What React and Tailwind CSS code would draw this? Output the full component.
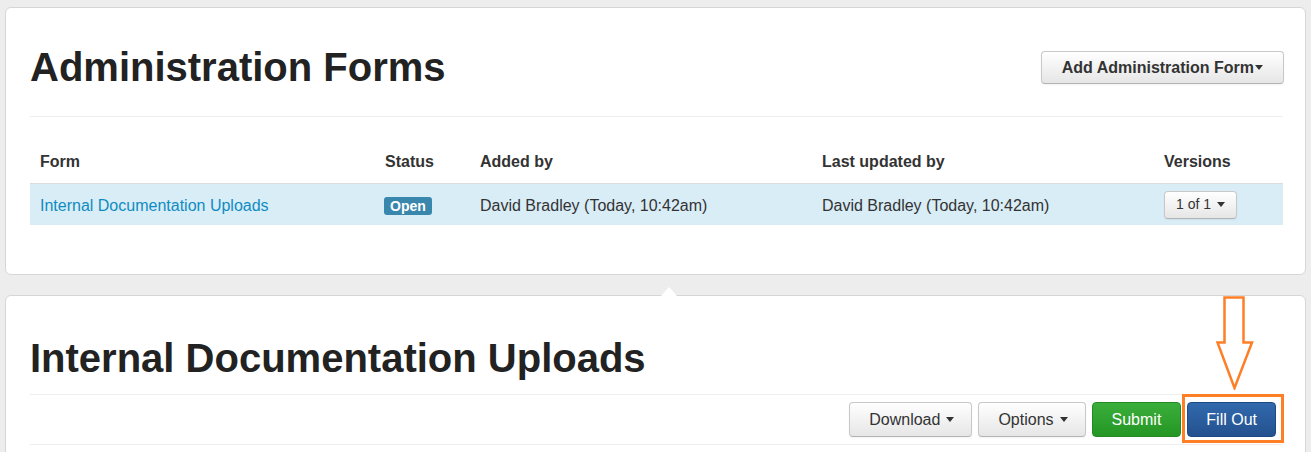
import React from 'react';

// Small downward caret used on dropdown buttons
function Caret({ className = '' }) {
  return (
    <span
      className={`inline-block w-0 h-0 border-t-[5px] border-t-[#333] border-x-[4.5px] border-x-transparent ${className}`}
    />
  );
}

function DefaultButton({ children, className = '' }) {
  return (
    <button
      className={`flex items-center rounded-[4px] border border-[#c8c8c8] border-b-[#b3b3b3] bg-gradient-to-b from-white to-[#e6e6e6] text-[#333] shadow-[inset_0_1px_0_rgba(255,255,255,0.3),0_1px_2px_rgba(0,0,0,0.05)] ${className}`}
    >
      {children}
    </button>
  );
}

const COLUMNS = [
  { label: 'Form', width: 'w-[345px]' },
  { label: 'Status', width: 'w-[95px]' },
  { label: 'Added by', width: 'w-[342px]' },
  { label: 'Last updated by', width: 'w-[342px]' },
  { label: 'Versions', width: 'w-[129px]' },
];

function FormsTable() {
  return (
    <table className="w-[1253px] table-fixed border-collapse text-[16px] text-[#333]">
      <thead>
        <tr>
          {COLUMNS.map(col => (
            <th
              key={col.label}
              className={`${col.width} h-[43px] px-[10px] pt-[2px] text-left align-middle font-bold border-b border-[#dcdcdc]`}
            >
              {col.label}
            </th>
          ))}
        </tr>
      </thead>
      <tbody>
        <tr className="bg-[#d9edf7]">
          <td className="h-[42px] px-[10px] pt-[4px] align-middle">
            <a className="text-[#0e8cc2]" href="#">Internal Documentation Uploads</a>
          </td>
          <td className="px-[9px] pt-[4px] align-middle">
            <span className="inline-flex items-center h-[18px] px-[6px] rounded-[3px] bg-[#3a87ad] text-white font-bold text-[14px] leading-none">
              Open
            </span>
          </td>
          <td className="px-[10px] pt-[4px] align-middle">David Bradley (Today, 10:42am)</td>
          <td className="px-[10px] pt-[4px] align-middle">David Bradley (Today, 10:42am)</td>
          <td className="px-[10px] pt-[1px] align-middle">
            <DefaultButton className="h-[28px] px-[11px] gap-[6px] text-[14px]">
              1 of 1 <Caret />
            </DefaultButton>
          </td>
        </tr>
      </tbody>
    </table>
  );
}

// Hollow annotation arrow pointing at the Fill Out button
function AnnotationArrow() {
  return (
    <svg
      className="absolute left-[29px] top-[-106px]"
      width="38"
      height="94"
      viewBox="0 0 38 94"
      fill="none"
    >
      <path
        d="M8.5 1.5 H27.5 V46.5 H36 L18.5 92 L1.5 46.5 H8.5 Z"
        stroke="#fd7f27"
        strokeWidth="2.5"
        strokeLinejoin="miter"
      />
    </svg>
  );
}

export default function App() {
  return (
    <div
      className="h-[452px] overflow-hidden bg-[#ededed] pt-[7px] pl-[5px]"
      style={{ fontFamily: '"Liberation Sans", Arial, sans-serif' }}
    >
      {/* Administration Forms card */}
      <div className="w-[1301px] h-[268px] rounded-[6px] border border-[#d6d6d6] bg-white pl-[24px] pr-[21px] pt-[37px]">
        <div className="flex items-center justify-between h-[44px]">
          <h1 className="text-[40px] leading-[44px] font-bold text-[#222]">Administration Forms</h1>
          <DefaultButton className="h-[33px] mt-[1px] pl-[20px] pr-[20px] font-bold text-[16px] text-[#222]">
            Add Administration Form<Caret className="ml-[1px] border-t-[#222]" />
          </DefaultButton>
        </div>
        <div className="mt-[27px] border-t border-[#eee] w-[1253px]" />
        <div className="mt-[23px]">
          <FormsTable />
        </div>
      </div>

      {/* Selected form card */}
      <div className="relative mt-[20px] w-[1301px] h-[300px] rounded-[6px] border border-[#d6d6d6] bg-white pl-[24px] pr-[21px] pt-[40px]">
        <span className="absolute left-[655px] top-[-9px] w-0 h-0 border-b-[9px] border-b-white border-x-[8px] border-x-transparent" />
        <h2 className="text-[40px] leading-[44px] font-bold text-[#222]">Internal Documentation Uploads</h2>
        <div className="mt-[14px] border-t border-[#eee] w-[1253px]" />
        <div className="flex justify-end items-center gap-[6px] w-[1253px] pr-[7px] pt-[7px] text-[16px]">
          <DefaultButton className="h-[35px] pl-[19px] pr-[17px] gap-[6px]">
            Download <Caret />
          </DefaultButton>
          <DefaultButton className="h-[35px] pl-[19px] pr-[17px] gap-[6px]">
            Options <Caret />
          </DefaultButton>
          <button className="h-[35px] px-[19px] rounded-[4px] border border-[#238a23] bg-gradient-to-b from-[#3aae3a] to-[#249624] text-white">
            Submit
          </button>
          <div className="relative">
            <button className="h-[35px] px-[18px] rounded-[4px] border border-[#1d4a85] bg-gradient-to-b from-[#3169ad] to-[#24518f] text-white">
              Fill Out
            </button>
            <span className="absolute left-[-5px] right-[-8px] top-[-8px] bottom-[-6px] border-[3px] border-[#ff7f27]" />
            <AnnotationArrow />
          </div>
        </div>
        <div className="mt-[7px] border-t border-[#eee] w-[1253px]" />
      </div>
    </div>
  );
}
